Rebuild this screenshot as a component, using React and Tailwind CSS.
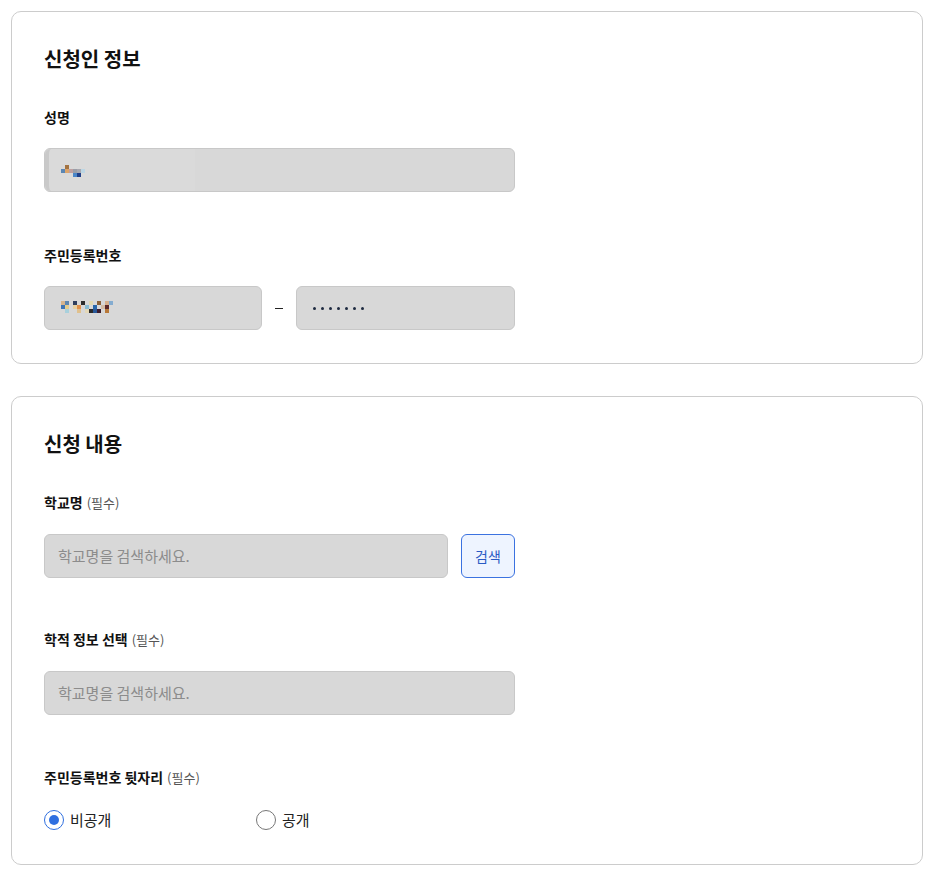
import { useState } from "react";

const font = { fontFamily: '"Noto Sans CJK KR", "Noto Sans", sans-serif' };

// blurred mosaic cells standing in for masked personal data
const nameCells = [
  [0, 1, "#5a86b4"],
  [1, 0, "#a37342"],
  [1, 1, "#dca46a"],
  [2, 1, "#c0a0a0"],
  [3, 1, "#9a9ea8"],
  [4, 1, "#a8a8b0"],
  [5, 1, "#bcd6e4"],
  [3, 2, "#4a86c8"],
  [4, 2, "#1f3f8a"],
];

const rrnCells = [
  ["#d6b48c", "#5c86b0", null, "#2e3e5e", null, "#2c2c2c", null, "#e0d8b0", null, "#8c6238", null, "#d8b08c", "#84acd0"],
  ["#3c74b4", "#e4cc8c", null, "#e8d0a0", "#e0904c", null, "#88bcd4", null, "#2866a8", null, "#d4bca4", "#5c2828", null],
  [null, "#a8d0dc", null, null, "#e0c08c", null, "#e4d8b8", "#2a2a2a", "#285898", "#3c1c2c", null, "#b87838", null],
];

function Label({ children, required }) {
  return (
    <div className="text-[14px] font-bold text-[#111] leading-[20px]">
      {children}
      {required && (
        <span className="ml-1 text-[13px] font-normal text-[#555]">(필수)</span>
      )}
    </div>
  );
}

function Field({ children, className = "" }) {
  return (
    <div
      className={`relative h-[44px] rounded-[6px] border border-[#c8c8c8] bg-[#d8d8d8] flex items-center px-[13px] ${className}`}
    >
      {children}
    </div>
  );
}

function Radio({ checked, label, onClick }) {
  return (
    <button type="button" onClick={onClick} className="flex items-center gap-[6px] w-[212px]">
      <span
        className={`w-[20px] h-[20px] rounded-full border-[1.5px] flex items-center justify-center bg-white ${
          checked ? "border-[#2f6fe0]" : "border-[#777]"
        }`}
      >
        {checked && <span className="w-[10px] h-[10px] rounded-full bg-[#2f6fe0]" />}
      </span>
      <span className="text-[15px] text-[#222]">{label}</span>
    </button>
  );
}

export default function App() {
  const [open, setOpen] = useState("private");

  return (
    <div style={font} className="bg-white min-h-[880px] pl-[11px] pr-[15px] pt-[11px]">
      {/* 신청인 정보 */}
      <section className="border border-[#cccccc] rounded-[10px] px-[32px] pt-[33px] pb-[33px]">
        <h2 className="text-[20px] font-bold text-[#111] leading-[28px]">신청인 정보</h2>

        <div className="mt-[34px]">
          <Label>성명</Label>
          <Field className="mt-[21px] w-[471px]">
            <div className="absolute left-0 top-0 bottom-0 w-[150px] bg-[#dadada] border-l-[4px] border-[#c9c9c9] rounded-l-[6px]" />
            <div className="absolute left-[16px] top-[16px]">
              {nameCells.map(([x, y, c], i) => (
                <span
                  key={i}
                  className="absolute w-[4px] h-[4px]"
                  style={{ left: x * 4, top: y * 4, background: c }}
                />
              ))}
            </div>
          </Field>
        </div>

        <div className="mt-[53px]">
          <Label>주민등록번호</Label>
          <div className="mt-[21px] flex items-center w-[471px]">
            <Field className="w-[218px]">
              <div className="absolute left-[16px] top-[14px]">
                {rrnCells.map((row, y) =>
                  row.map((c, x) =>
                    c ? (
                      <span
                        key={`${x}-${y}`}
                        className="absolute w-[4px] h-[4px]"
                        style={{ left: x * 4, top: y * 4, background: c }}
                      />
                    ) : null
                  )
                )}
              </div>
            </Field>
            <div className="flex-1 flex justify-center">
              <span className="block w-[8px] h-[1px] bg-[#222]" />
            </div>
            <Field className="w-[219px]">
              <div className="flex gap-[5px] pl-[3px]">
                {Array.from({ length: 7 }).map((_, i) => (
                  <span key={i} className="w-[3px] h-[3px] rounded-full bg-[#1e2a40]" />
                ))}
              </div>
            </Field>
          </div>
        </div>
      </section>

      {/* 신청 내용 */}
      <section className="mt-[32px] border border-[#cccccc] rounded-[10px] px-[32px] pt-[33px] pb-[32px]">
        <h2 className="text-[20px] font-bold text-[#111] leading-[28px]">신청 내용</h2>

        <div className="mt-[34px]">
          <Label required>학교명</Label>
          <div className="mt-[21px] flex gap-[13px] w-[471px]">
            <Field className="flex-1">
              <span className="text-[15px] text-[#8c8c8c]">학교명을 검색하세요.</span>
            </Field>
            <button
              type="button"
              className="w-[54px] h-[44px] rounded-[6px] border border-[#3b72e0] bg-[#eef4ff] text-[14px] text-[#2a5bc4]"
            >
              검색
            </button>
          </div>
        </div>

        <div className="mt-[51px]">
          <Label required>학적 정보 선택</Label>
          <Field className="mt-[21px] w-[471px]">
            <span className="text-[15px] text-[#8c8c8c]">학교명을 검색하세요.</span>
          </Field>
        </div>

        <div className="mt-[52px]">
          <Label required>주민등록번호 뒷자리</Label>
          <div className="mt-[21px] flex">
            <Radio checked={open === "private"} label="비공개" onClick={() => setOpen("private")} />
            <Radio checked={open === "public"} label="공개" onClick={() => setOpen("public")} />
          </div>
        </div>
      </section>
    </div>
  );
}
